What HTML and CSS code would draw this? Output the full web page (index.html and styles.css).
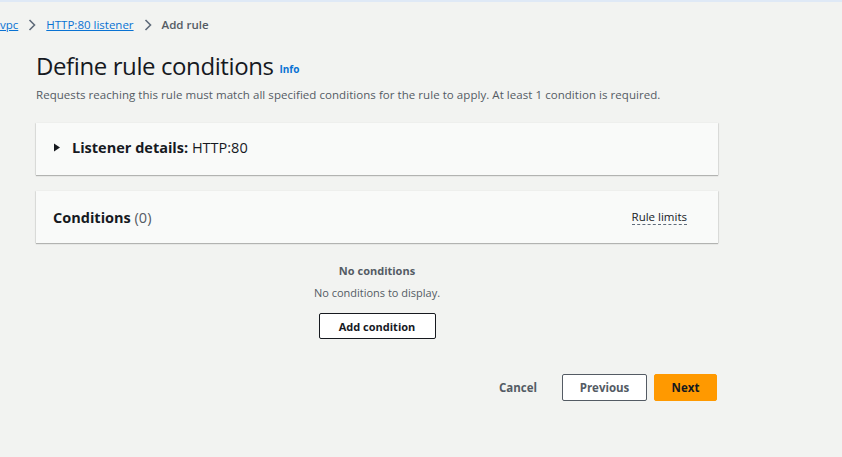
FILE: index.html
```html
<!DOCTYPE html>
<html>
<head>
<meta charset="utf-8">
<link rel="stylesheet" href="styles.css">
</head>
<body>
<div class="topline"></div>
<nav class="crumbs">
  <a class="crumb-link">vpc</a>
  <svg class="chev" width="8" height="12" viewBox="0 0 8 12"><path d="M1.5 1 L6.5 6 L1.5 11" fill="none" stroke="#5f6b7a" stroke-width="1.6"/></svg>
  <a class="crumb-link">HTTP:80 listener</a>
  <svg class="chev" width="8" height="12" viewBox="0 0 8 12"><path d="M1.5 1 L6.5 6 L1.5 11" fill="none" stroke="#5f6b7a" stroke-width="1.6"/></svg>
  <span class="crumb-current">Add rule</span>
</nav>
<main class="page">
  <header class="head">
    <h1 class="title">Define rule conditions <span class="info">Info</span></h1>
    <p class="desc">Requests reaching this rule must match all specified conditions for the rule to apply. At least 1 condition is required.</p>
  </header>
  <section class="card">
    <div class="card-row first">
      <svg class="caret" width="8" height="9" viewBox="0 0 8 9"><path d="M1 0.5 L7 4.5 L1 8.5 Z" fill="#16191f"/></svg>
      <span class="card-title">Listener details:</span>&nbsp;<span class="card-val">HTTP:80</span>
    </div>
  </section>
  <section class="card">
    <div class="card-row split">
      <span><span class="card-title">Conditions</span> <span class="count">(0)</span></span>
      <span class="limits">Rule limits</span>
    </div>
  </section>
  <div class="empty">
    <div class="empty-title">No conditions</div>
    <div class="empty-sub">No conditions to display.</div>
    <button class="btn add">Add condition</button>
  </div>
  <div class="actions">
    <span class="cancel">Cancel</span>
    <button class="btn prev">Previous</button>
    <button class="btn primary">Next</button>
  </div>
</main>
</body>
</html>
```
FILE: styles.css
```css
* { box-sizing: border-box; }
body {
  margin: 0;
  background: #f2f3f1;
  font-family: "Open Sans", "Noto Sans", sans-serif;
  color: #16191f;
  width: 842px;
  height: 457px;
  overflow: hidden;
}
.topline { height: 2px; background: #dfe9f6; }
.crumbs {
  display: flex;
  align-items: center;
  gap: 10px;
  height: 44px;
  font-size: 11.5px;
}
.crumb-link { color: #0972d3; text-decoration: underline; }
.crumb-current { color: #545b64; font-weight: 600; }
.chev { margin-top: 1px; }
.page { width: 682px; margin-left: 36px; }
.head { padding-top: 5px; }
.title {
  margin: 0;
  font-size: 24px;
  font-weight: 400;
  line-height: 30px;
  color: #16191f;
  letter-spacing: -0.4px;
}
.info { font-size: 10px; font-weight: 700; color: #0972d3; letter-spacing: 0; vertical-align: 2px; margin-left: 0; }
.desc {
  margin: 3px 0 0;
  font-size: 11.5px;
  color: #545b64;
  line-height: 16px;
  letter-spacing: 0.05px;
}
.card {
  background: #f9faf9;
  margin-top: 20px;
  box-shadow: 0 1px 1px rgba(0,0,0,0.25), 1px 0 1px rgba(0,0,0,0.06), -1px 0 1px rgba(0,0,0,0.06);
  height: 52px;
}
.card + .card { margin-top: 16px; }
.card-row {
  display: flex;
  align-items: center;
  height: 52px;
  padding: 0 17px;
  font-size: 14.5px;
}
.card-row.first { padding-bottom: 4px; }
.card-row.split { justify-content: space-between; padding-right: 31px; }
.caret { margin-right: 11px; }
.card-title { font-weight: 700; }
.card-val { color: #16191f; }
.count { color: #545b64; }
.limits {
  font-size: 11.5px;
  color: #16191f;
  border-bottom: 1px dashed #5f6b7a;
  line-height: 14px;
}
.empty {
  display: flex;
  flex-direction: column;
  align-items: center;
  padding-top: 20px;
}
.empty-title { font-size: 11px; font-weight: 700; color: #545b64; line-height: 16px; }
.empty-sub { font-size: 11px; color: #545b64; margin-top: 6px; line-height: 16px; }
.btn {
  font-family: inherit;
  font-size: 11px;
  font-weight: 700;
  color: #16191f;
  background: #fff;
  border: 1px solid #16191f;
  border-radius: 2px;
  height: 26px;
  padding: 0;
}
.add { width: 117px; margin-top: 12px; }
.actions {
  display: flex;
  align-items: center;
  justify-content: flex-end;
  margin-top: 35px;
  padding-right: 1px;
}
.actions .btn { height: 27px; }
.cancel { font-size: 11.5px; font-weight: 700; color: #545b64; margin-right: 25px; }
.prev { width: 85px; font-size: 11.5px; color: #545b64; border-color: #545b64; margin-right: 7px; }
.primary { width: 63px; font-size: 11.5px; background: #ff9900; border-color: #ff9900; color: #16191f; }
```
